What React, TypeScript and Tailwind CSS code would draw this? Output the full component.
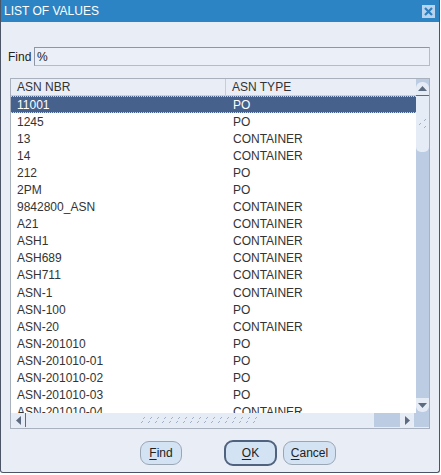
import React from "react";

const rows: [string, string][] = [
  ["11001", "PO"],
  ["1245", "PO"],
  ["13", "CONTAINER"],
  ["14", "CONTAINER"],
  ["212", "PO"],
  ["2PM", "PO"],
  ["9842800_ASN", "CONTAINER"],
  ["A21", "CONTAINER"],
  ["ASH1", "CONTAINER"],
  ["ASH689", "CONTAINER"],
  ["ASH711", "CONTAINER"],
  ["ASN-1", "CONTAINER"],
  ["ASN-100", "PO"],
  ["ASN-20", "CONTAINER"],
  ["ASN-201010", "PO"],
  ["ASN-201010-01", "PO"],
  ["ASN-201010-02", "PO"],
  ["ASN-201010-03", "PO"],
  ["ASN-201010-04", "CONTAINER"],
];

function HGrip() {
  const ticks = Array.from({ length: 17 });
  return (
    <svg width="118" height="6" viewBox="0 0 118 6">
      {ticks.map((_, i) => (
        <g key={i} fill="#9fb0c6">
          <rect x={i * 7 + 3} y={0} width={1} height={1} />
          <rect x={i * 7 + 2} y={1} width={1} height={1} />
          <rect x={i * 7 + 1} y={4} width={1} height={1} />
          <rect x={i * 7} y={5} width={1} height={1} />
        </g>
      ))}
    </svg>
  );
}

function VGrip() {
  return (
    <svg width="8" height="10" viewBox="0 0 8 10" fill="#9fb0c6">
      <rect x="6" y="0" width="1" height="1" />
      <rect x="5" y="1" width="1" height="1" />
      <rect x="1" y="4" width="1" height="1" />
      <rect x="0" y="5" width="1" height="1" />
      <rect x="6" y="7" width="1" height="1" />
      <rect x="5" y="8" width="1" height="1" />
    </svg>
  );
}

function Btn({ label, w, primary }: { label: string; w: string; primary?: boolean }) {
  return (
    <button
      className={`${w} flex items-center justify-center rounded-[9px] bg-[#d4e3f4] text-[12px] text-[#222] ${
        primary ? "h-[26px] border-2 border-[#50627e]" : "h-[24px] border border-[#9ba6b5]"
      }`}
    >
      <span className="underline decoration-1 underline-offset-2">{label[0]}</span>
      {label.slice(1)}
    </button>
  );
}

export default function App() {
  return (
    <div className="h-[475px] w-[441px] bg-white" style={{ fontFamily: '"Liberation Sans", Arial, sans-serif' }}>
      <div className="flex h-[473px] w-[440px] flex-col rounded-b-[3px] border border-t-0 border-[#4b5566] bg-[#e9eef6]">
        {/* title bar */}
        <div className="flex h-[22px] items-center justify-between bg-[#2c84c4] pl-[3px] pr-[4px]">
          <span className="text-[12px] leading-none text-white">LIST OF VALUES</span>
          <div className="flex h-[13px] w-[13px] items-center justify-center bg-[#b9d3ec]">
            <svg width="9" height="9" viewBox="0 0 9 9">
              <path d="M1 1 L8 8 M8 1 L1 8" stroke="#2c7fc0" strokeWidth="2.2" />
            </svg>
          </div>
        </div>

        {/* find row */}
        <div className="mt-[25px] flex h-[19px] items-center pl-[7px] pr-[9px]">
          <span className="w-[26px] text-[12px] text-[#222]">Find</span>
          <div className="flex h-[19px] flex-1 items-center border border-[#b3bccb] border-t-[#8d96a4] border-l-[#8d96a4] bg-[#ebf0f8] pl-[2px] text-[12px] text-[#222]">
            %
          </div>
        </div>

        {/* table panel */}
        <div className="mx-[9px] mt-[12px] flex h-[351px] flex-col border border-[#a9b1be] bg-[#e9eef6]">
          <div className="flex h-[334px]">
            {/* list */}
            <div className="flex w-[405px] flex-col overflow-hidden bg-white">
              <div className="flex h-[17px] shrink-0 border-b border-[#c5cdd9] bg-[#e9eef6] text-[12px] text-[#333]">
                <div className="flex w-[215px] items-center border-r border-[#c5cdd9] pl-[6px]">ASN NBR</div>
                <div className="flex items-center pl-[6px]">ASN TYPE</div>
              </div>
              {rows.map(([nbr, type], i) => (
                <div
                  key={nbr}
                  className={`flex h-[17.1px] shrink-0 text-[12px] ${
                    i === 0
                      ? "border-y border-dotted border-[#c9d3e2] bg-[#46628c] text-white"
                      : "text-[#333]"
                  }`}
                >
                  <div className="flex w-[216px] items-center pl-[6px]">{nbr}</div>
                  <div className="flex items-center pl-[6px]">{type}</div>
                </div>
              ))}
            </div>
            {/* vertical scrollbar */}
            <div className="flex w-[13px] flex-col bg-[#bccde3]">
              <div className="mt-[3px] flex h-[14px] items-center justify-center rounded-t-[6px] border-b border-[#5d6b80] bg-[#e6ecf5]">
                <svg width="9" height="5" viewBox="0 0 9 5">
                  <path d="M0 5 L4.5 0 L9 5 Z" fill="#5d6b80" />
                </svg>
              </div>
              <div className="flex h-[56px] items-center justify-center rounded-b-[5px] bg-[#e6ecf5]">
                <VGrip />
              </div>
              <div className="flex-1" />
              <div className="mb-[1px] flex h-[14px] items-center justify-center rounded-b-[6px] bg-[#e6ecf5]">
                <svg width="9" height="5" viewBox="0 0 9 5">
                  <path d="M0 0 L4.5 5 L9 0 Z" fill="#5d6b80" />
                </svg>
              </div>
            </div>
          </div>
          {/* horizontal scrollbar */}
          <div className="flex h-[14px]">
            <div className="flex w-[15px] items-center justify-center rounded-l-[6px] border-r border-[#5d6b80] bg-[#e6ecf5]">
              <svg width="5" height="9" viewBox="0 0 5 9">
                <path d="M5 0 L0 4.5 L5 9 Z" fill="#5d6b80" />
              </svg>
            </div>
            <div className="flex w-[348px] items-center justify-center rounded-r-[5px] bg-[#e6ecf5]">
              <HGrip />
            </div>
            <div className="w-[26px] bg-[#bccde3]" />
            <div className="flex w-[14px] items-center justify-center rounded-r-[6px] bg-[#e6ecf5]">
              <svg width="5" height="9" viewBox="0 0 5 9">
                <path d="M0 0 L5 4.5 L0 9 Z" fill="#5d6b80" />
              </svg>
            </div>
            <div className="flex-1 bg-[#bccde3]" />
          </div>
        </div>

        {/* buttons */}
        <div className="mt-[11px] flex items-center pl-[139px]">
          <Btn label="Find" w="w-[42px]" />
          <div className="w-[42px]" />
          <Btn label="OK" w="w-[53px]" primary />
          <div className="w-[6px]" />
          <Btn label="Cancel" w="w-[53px]" />
        </div>
      </div>
    </div>
  );
}
